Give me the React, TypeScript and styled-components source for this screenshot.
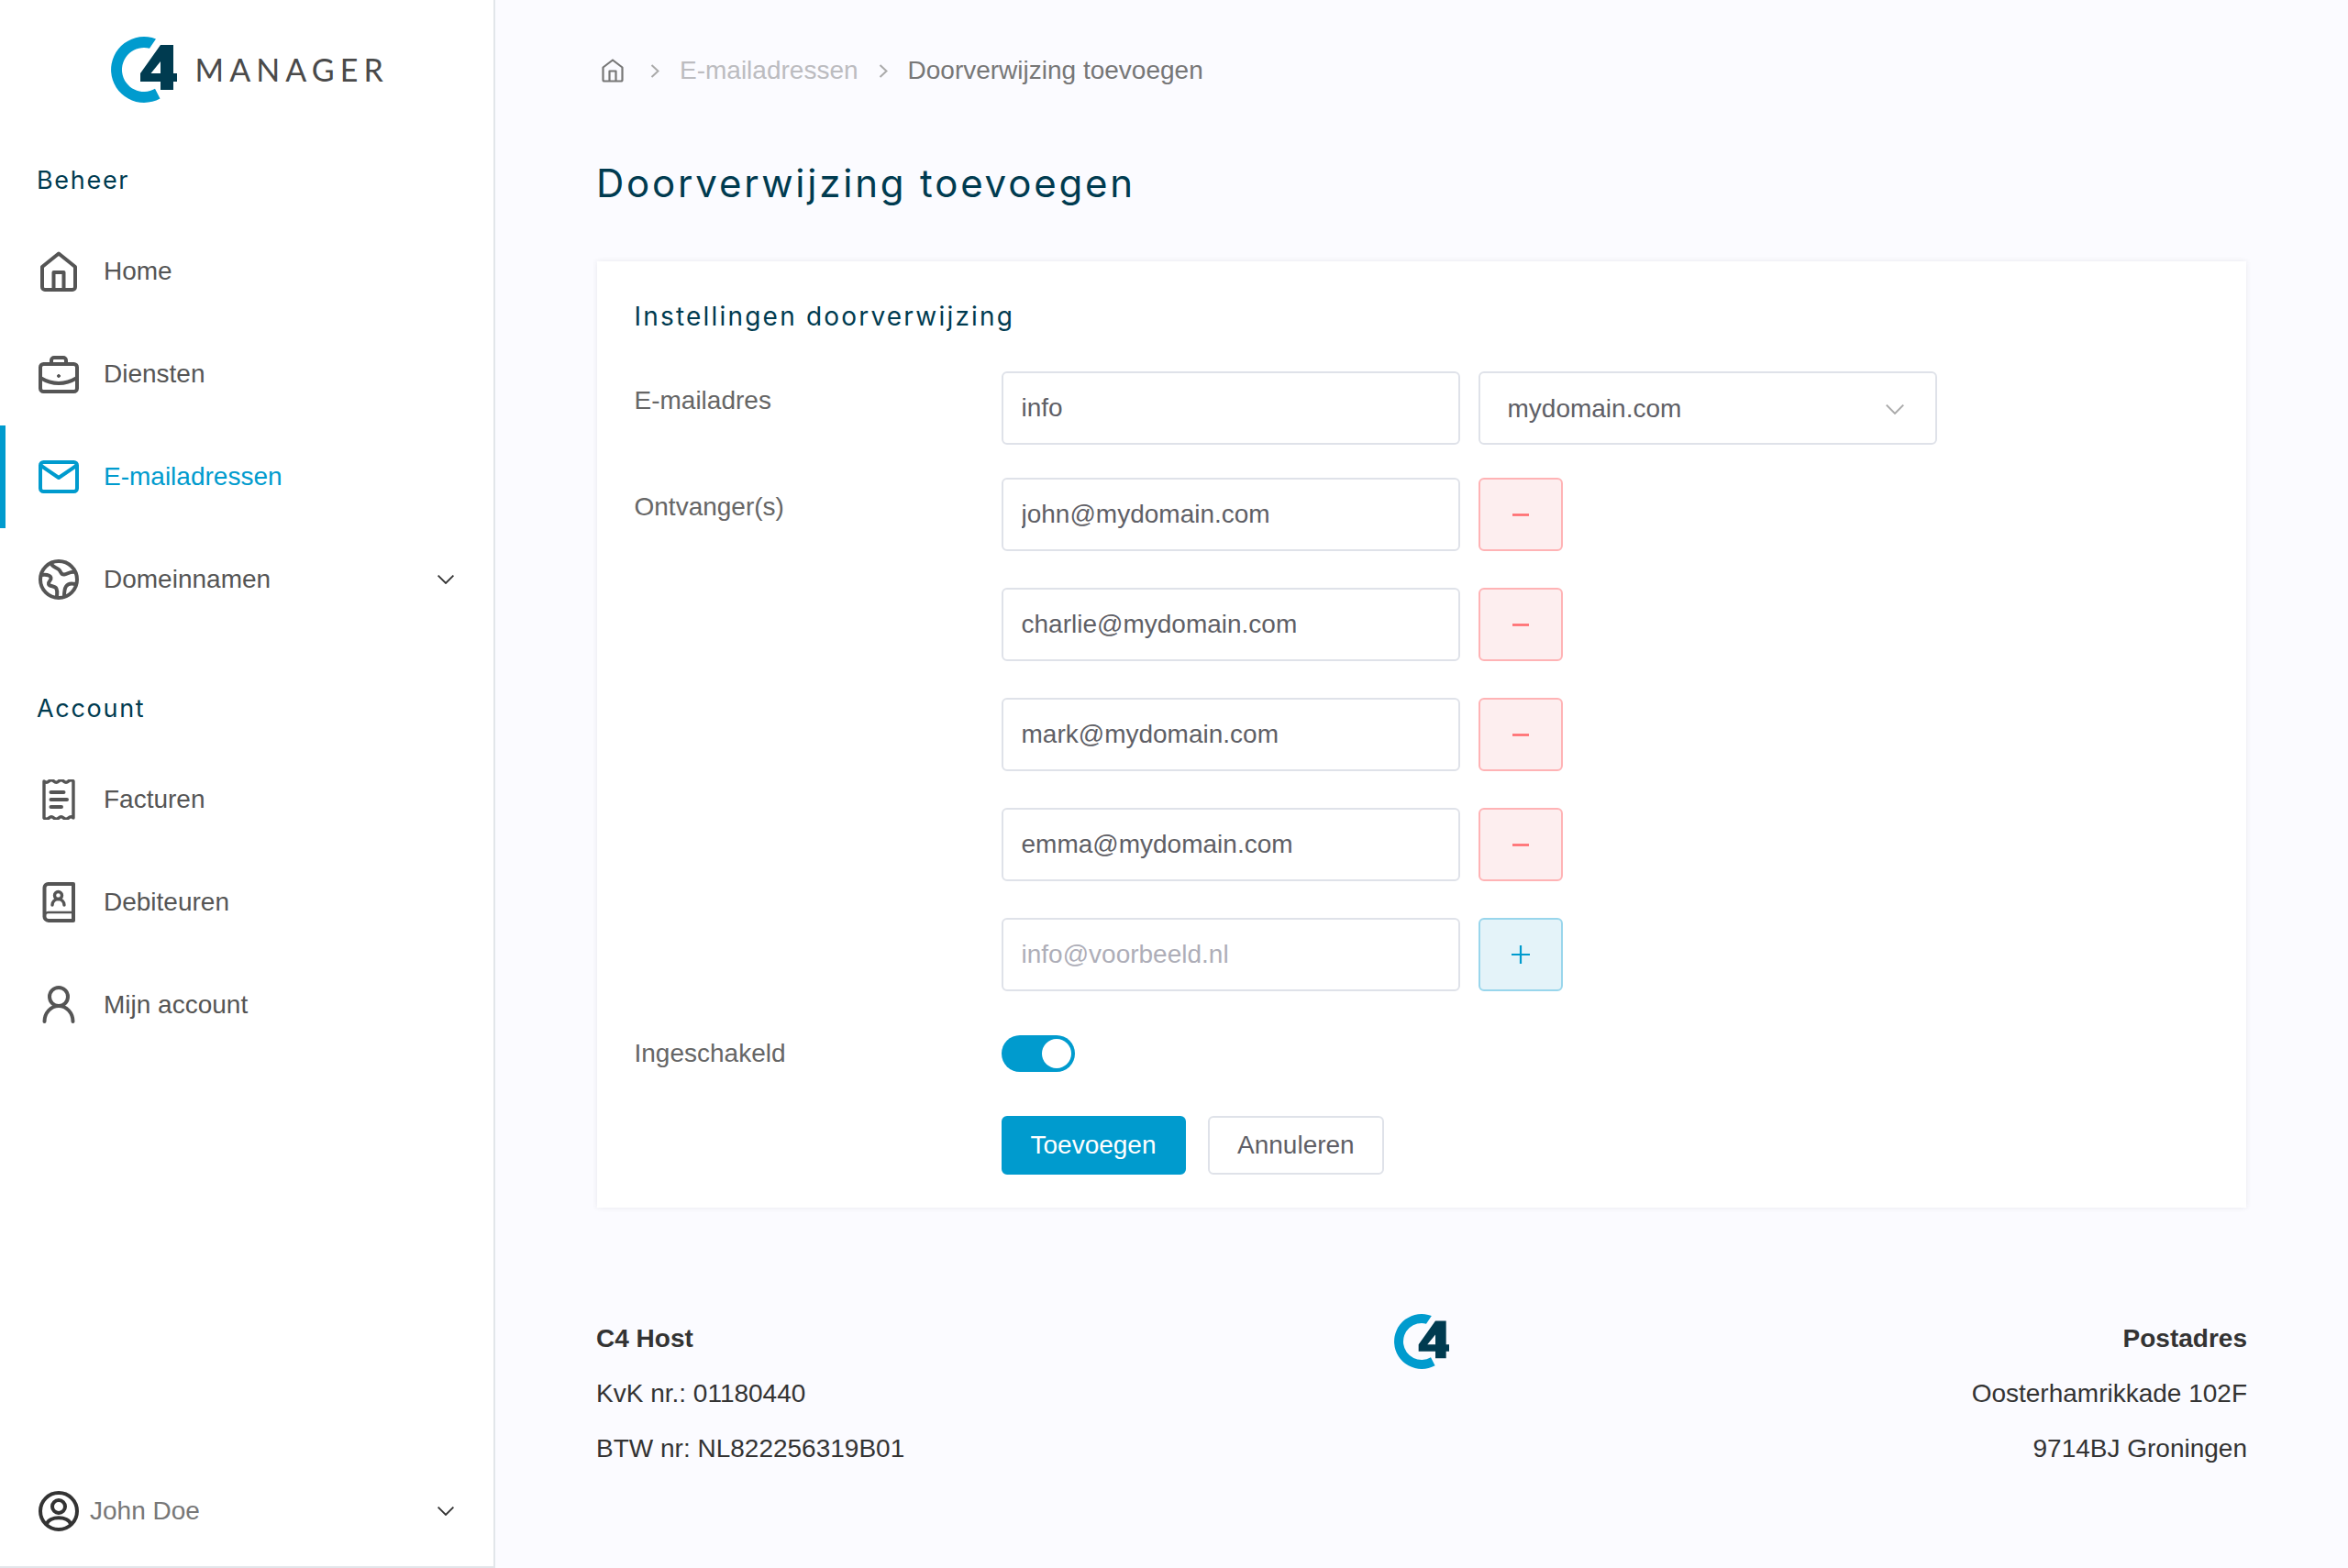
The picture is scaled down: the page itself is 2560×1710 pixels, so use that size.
import React from "react";
import styled, { createGlobalStyle } from "styled-components";

const Global = createGlobalStyle`
  html, body { margin: 0; padding: 0; background: #fbfbff; }
  * { box-sizing: border-box; }
  body { font-family: "Liberation Sans", Arial, sans-serif; font-size: 28px; color: #555; }
`;

const heading = `"Inter", "Noto Sans", sans-serif`;

const Page = styled.div`
  display: grid;
  grid-template-columns: 540px 1fr;
  width: 2560px;
  height: 1710px;
  overflow: hidden;
`;
const Sidebar = styled.aside`
  display: flex;
  flex-direction: column;
  background: #fff;
  border-right: 2px solid #e2e6ea;
  border-bottom: 2px solid #e2e6ea;
`;
const Brand = styled.div`
  display: flex;
  align-items: center;
  gap: 20px;
  height: 152px;
  padding: 40px 0 40px 120.5px;
`;
const BrandText = styled.span`
  font-family: "Lato", sans-serif;
  font-weight: 400;
  font-size: 34px;
  line-height: 34px;
  letter-spacing: 6.1px;
  color: #4a4a4a;
`;
const NavTitle = styled.div<{ $top?: number }>`
  display: flex;
  align-items: center;
  height: 88px;
  margin-top: ${(p) => p.$top ?? 0}px;
  padding-left: 40px;
  font-family: ${heading};
  font-size: 27px;
  font-weight: 400;
  letter-spacing: 1.7px;
  color: #003b50;
`;
const NavRow = styled.div<{ $active?: boolean }>`
  display: flex;
  align-items: center;
  gap: 27px;
  height: 112px;
  padding: 0 43px 0 42px;
  color: ${(p) => (p.$active ? "#009bce" : "#555")};
  box-shadow: ${(p) => (p.$active ? "inset 6px 0 0 #009bce" : "none")};
  line-height: 32px;
  svg.nav { flex: none; }
`;
const NavLabel = styled.span`
  flex: 1;
`;
const Profile = styled.div`
  display: flex;
  align-items: center;
  gap: 12px;
  height: 112px;
  margin-top: auto;
  margin-bottom: 4px;
  padding: 0 43px 0 42px;
  color: #777;
`;
const Main = styled.main`
  display: flex;
  flex-direction: column;
  padding: 0 110px;
`;
const Crumbs = styled.nav`
  display: flex;
  align-items: center;
  gap: 22px;
  height: 154px;
  padding-left: 6px;
`;
const Crumb = styled.span<{ $muted?: boolean }>`
  color: ${(p) => (p.$muted ? "#bcbcc0" : "#777")};
`;
const HomeCrumb = styled.span`
  display: flex;
  margin-right: 7px;
`;
const Title = styled.h1`
  margin: 0;
  height: 131px;
  padding-top: 20px;
  font-family: ${heading};
  font-size: 42px;
  line-height: 52px;
  font-weight: 400;
  letter-spacing: 2.8px;
  color: #003b50;
`;
const Card = styled.section`
  display: flex;
  flex-direction: column;
  height: 1032px;
  margin: 0 1px;
  padding: 0 40.5px;
  background: #fff;
  box-shadow: 0 0 6px rgba(40, 40, 70, 0.09);
`;
const CardTitle = styled.h2`
  display: flex;
  align-items: center;
  height: 120px;
  margin: 0;
  font-family: ${heading};
  font-size: 28px;
  font-weight: 400;
  letter-spacing: 2.2px;
  color: #003b50;
`;
const FormRow = styled.div<{ $top: number; $center?: boolean }>`
  display: grid;
  grid-template-columns: 400px 1fr;
  align-items: ${(p) => (p.$center ? "center" : "start")};
  margin-top: ${(p) => p.$top}px;
`;
const Label = styled.label<{ $center?: boolean }>`
  padding-top: ${(p) => (p.$center ? 0 : 16)}px;
  line-height: 32px;
  color: #666;
`;
const Fields = styled.div`
  display: flex;
  gap: 20px;
`;
const FieldStack = styled.div`
  display: flex;
  flex-direction: column;
  gap: 40px;
`;
const Input = styled.input`
  width: 500px;
  height: 80px;
  padding: 0 20px;
  border: 2px solid #dfe2e9;
  border-radius: 6px;
  background: #fff;
  outline: none;
  font: 28px "Liberation Sans", Arial, sans-serif;
  color: #5f5f66;
  &::placeholder { color: #aeaeb8; opacity: 1; }
`;
const Select = styled.div`
  display: flex;
  align-items: center;
  justify-content: space-between;
  width: 500px;
  height: 80px;
  padding: 2px 34px 0 30px;
  border: 2px solid #dfe2e9;
  border-radius: 6px;
  color: #5f5f66;
`;
const SquareButton = styled.button<{ $add?: boolean }>`
  display: flex;
  align-items: center;
  justify-content: center;
  width: 92px;
  height: 80px;
  padding: 0;
  border: 2px solid ${(p) => (p.$add ? "#99d6ec" : "#ffb3b5")};
  border-radius: 6px;
  background: ${(p) => (p.$add ? "#e4f3f9" : "#fdeeef")};
`;
const Toggle = styled.div`
  display: flex;
  justify-content: flex-end;
  align-items: center;
  width: 80px;
  height: 40px;
  padding: 4px;
  border-radius: 20px;
  background: #009bce;
`;
const Knob = styled.span`
  width: 32px;
  height: 32px;
  border-radius: 50%;
  background: #fff;
`;
const Actions = styled.div`
  display: flex;
  gap: 24px;
`;
const Button = styled.button<{ $primary?: boolean }>`
  height: 64px;
  padding: 0 ${(p) => (p.$primary ? 30 : 30.500)}px;
  border: 2px solid ${(p) => (p.$primary ? "#009bce" : "#dfe2e9")};
  border-radius: 6px;
  background: ${(p) => (p.$primary ? "#009bce" : "#fff")};
  color: ${(p) => (p.$primary ? "#fff" : "#5f5f66")};
  font: 28px "Liberation Sans", Arial, sans-serif;
`;
const Footer = styled.footer`
  display: grid;
  grid-template-columns: 1fr auto 1fr;
  margin-top: 113px;
  color: #333;
  line-height: 60px;
`;
const FooterCol = styled.div<{ $right?: boolean }>`
  text-align: ${(p) => (p.$right ? "right" : "left")};
`;
const FooterLogo = styled.div`
  display: flex;
  padding-top: 3px;
`;
const Strong = styled.div`
  font-weight: 700;
`;

const Logo = ({ size }: { size: number }) => (
  <svg width={size} height={size} viewBox="0 0 72 72" style={{ flex: "none" }}>
    <path d="M49 2.4A36 36 0 1 0 53.5 67.5L48 56.8A24 24 0 1 1 42 12.8Z" fill="#009bce" />
    <path fillRule="evenodd" d="M54 9H68V40H72V49H68V58H54V49H32V40ZM54 27L43.5 40H54Z" fill="#003b50" />
  </svg>
);

const Stroke = ({ children, color = "#555" }: { children: React.ReactNode; color?: string }) => (
  <svg className="nav" width="44" height="44" viewBox="0 0 44 44" fill="none" stroke={color} strokeWidth="4" strokeLinecap="round" strokeLinejoin="round">
    {children}
  </svg>
);

const HomeIcon = () => (
  <Stroke>
    <path d="M4 17L22 2.5 40 17V39a3 3 0 0 1-3 3H7a3 3 0 0 1-3-3Z" />
    <path d="M16.5 42V23H27.5V42" />
  </Stroke>
);
const CaseIcon = () => (
  <Stroke>
    <rect x="2" y="11" width="40" height="30" rx="3.5" />
    <path d="M14 11V7a3 3 0 0 1 3-3H27a3 3 0 0 1 3 3V11" />
    <path d="M2 26Q22 38 42 26" />
    <circle cx="22" cy="24" r="1.5" fill="#555" strokeWidth="1" />
  </Stroke>
);
const MailIcon = () => (
  <Stroke color="#009bce">
    <rect x="2" y="6" width="40" height="32" rx="3.5" />
    <path d="M3 10L22 23 41 10" />
  </Stroke>
);
const GlobeIcon = () => (
  <Stroke>
    <circle cx="22" cy="22" r="20" />
    <path d="M14 4c0 4 5 4.500 8 7s2 6 6 5.500 6-3.500 12-2.500" />
    <path d="M3.500 17c5-.5 9 0 10 3s-3.500 4-2.500 7 7 1.500 8.500 5 .5 6 .5 9" />
    <path d="M40 27c-4-1-8-.5-10 2.500s-2 7-2 11" />
  </Stroke>
);
const ReceiptIcon = () => (
  <Stroke>
    <path strokeWidth="3.4" d="M6 2q2.670 2.500 5.330 0t5.330 0 5.330 0 5.330 0 5.330 0 5.330 0V42q-2.670-2.500-5.330 0t-5.330 0-5.330 0-5.330 0-5.330 0-5.330 0Z" />
    <path d="M13.500 14H27.500M13.500 22H31M13.500 30H25" />
  </Stroke>
);
const BookIcon = () => (
  <Stroke>
    <path d="M6.500 37V6a4 4 0 0 1 4-4H38V42H11a4.500 4.500 0 0 1-4.500-5Z" />
    <path strokeWidth="2.500" d="M6.500 37a4 4 0 0 1 4-4H38" />
    <circle cx="21.500" cy="14.500" r="4" strokeWidth="3.400" />
    <path strokeWidth="3.400" d="M15 25a6.500 6.500 0 0 1 13 0" />
  </Stroke>
);
const UserIcon = () => (
  <Stroke>
    <circle cx="22" cy="13" r="10" />
    <path d="M6.500 40a15.500 17 0 0 1 31 0" />
  </Stroke>
);
const ProfileIcon = () => (
  <Stroke color="#333">
    <circle cx="22" cy="22" r="20" />
    <circle cx="22" cy="17" r="7" />
    <path d="M9 36c2-9 24-9 26 0" />
  </Stroke>
);
const Chevron = ({ color = "#333", w = 18 }: { color?: string; w?: number }) => (
  <svg width={w} height={w / 2 + 1} viewBox="0 0 18 10" fill="none" stroke={color} strokeWidth={1.8} style={{ flex: "none" }}>
    <path d="M.6.6L9 9 17.400.6" />
  </svg>
);
const CrumbArrow = () => (
  <svg width="10" height="15" viewBox="0 0 10 15" fill="none" stroke="#aaa" strokeWidth="2" style={{ flex: "none" }}>
    <path d="M1.500 1L8.500 7.500 1.500 14" />
  </svg>
);
const SmallHome = () => (
  <svg width="24" height="26" viewBox="0 0 24 26" fill="none" stroke="#777" strokeWidth="2.200" strokeLinejoin="round">
    <path d="M1.500 9.500L12 1.500 22.500 9.500V23a1.500 1.500 0 0 1-1.500 1.500H3A1.500 1.500 0 0 1 1.500 23Z" />
    <path d="M8.500 24.500V13.500H15.500V24.500" />
  </svg>
);
const Minus = () => (
  <svg width="18" height="3" viewBox="0 0 18 3"><path d="M0 1.500H18" stroke="#ff6b6e" strokeWidth="2.600" /></svg>
);
const Plus = () => (
  <svg width="20" height="20" viewBox="0 0 20 20"><path d="M0 10H20M10 0V20" stroke="#009bce" strokeWidth="2.200" /></svg>
);

const recipients = ["john@mydomain.com", "charlie@mydomain.com", "mark@mydomain.com", "emma@mydomain.com"];

export default function App() {
  return (
    <>
      <Global />
      <Page>
        <Sidebar>
          <Brand>
            <Logo size={72} />
            <BrandText>MANAGER</BrandText>
          </Brand>
          <NavTitle>Beheer</NavTitle>
          <NavRow><HomeIcon /><NavLabel>Home</NavLabel></NavRow>
          <NavRow><CaseIcon /><NavLabel>Diensten</NavLabel></NavRow>
          <NavRow $active><MailIcon /><NavLabel>E-mailadressen</NavLabel></NavRow>
          <NavRow><GlobeIcon /><NavLabel>Domeinnamen</NavLabel><Chevron /></NavRow>
          <NavTitle $top={40}>Account</NavTitle>
          <NavRow><ReceiptIcon /><NavLabel>Facturen</NavLabel></NavRow>
          <NavRow><BookIcon /><NavLabel>Debiteuren</NavLabel></NavRow>
          <NavRow><UserIcon /><NavLabel>Mijn account</NavLabel></NavRow>
          <Profile><ProfileIcon /><NavLabel>John Doe</NavLabel><Chevron /></Profile>
        </Sidebar>
        <Main>
          <Crumbs>
            <HomeCrumb><SmallHome /></HomeCrumb>
            <CrumbArrow />
            <Crumb $muted>E-mailadressen</Crumb>
            <CrumbArrow />
            <Crumb>Doorverwijzing toevoegen</Crumb>
          </Crumbs>
          <Title>Doorverwijzing toevoegen</Title>
          <Card>
            <CardTitle>Instellingen doorverwijzing</CardTitle>
            <FormRow $top={0}>
              <Label>E-mailadres</Label>
              <Fields>
                <Input defaultValue="info" readOnly />
                <Select>mydomain.com<Chevron color="#aaa" w={20} /></Select>
              </Fields>
            </FormRow>
            <FormRow $top={36}>
              <Label>Ontvanger(s)</Label>
              <FieldStack>
                {recipients.map((r) => (
                  <Fields key={r}>
                    <Input defaultValue={r} readOnly />
                    <SquareButton><Minus /></SquareButton>
                  </Fields>
                ))}
                <Fields>
                  <Input placeholder="info@voorbeeld.nl" readOnly />
                  <SquareButton $add><Plus /></SquareButton>
                </Fields>
              </FieldStack>
            </FormRow>
            <FormRow $top={48} $center>
              <Label $center>Ingeschakeld</Label>
              <Toggle><Knob /></Toggle>
            </FormRow>
            <FormRow $top={48}>
              <span />
              <Actions>
                <Button $primary>Toevoegen</Button>
                <Button>Annuleren</Button>
              </Actions>
            </FormRow>
          </Card>
          <Footer>
            <FooterCol>
              <Strong>C4 Host</Strong>
              <div>KvK nr.: 01180440</div>
              <div>BTW nr: NL822256319B01</div>
            </FooterCol>
            <FooterLogo><Logo size={60} /></FooterLogo>
            <FooterCol $right>
              <Strong>Postadres</Strong>
              <div>Oosterhamrikkade 102F</div>
              <div>9714BJ Groningen</div>
            </FooterCol>
          </Footer>
        </Main>
      </Page>
    </>
  );
}
